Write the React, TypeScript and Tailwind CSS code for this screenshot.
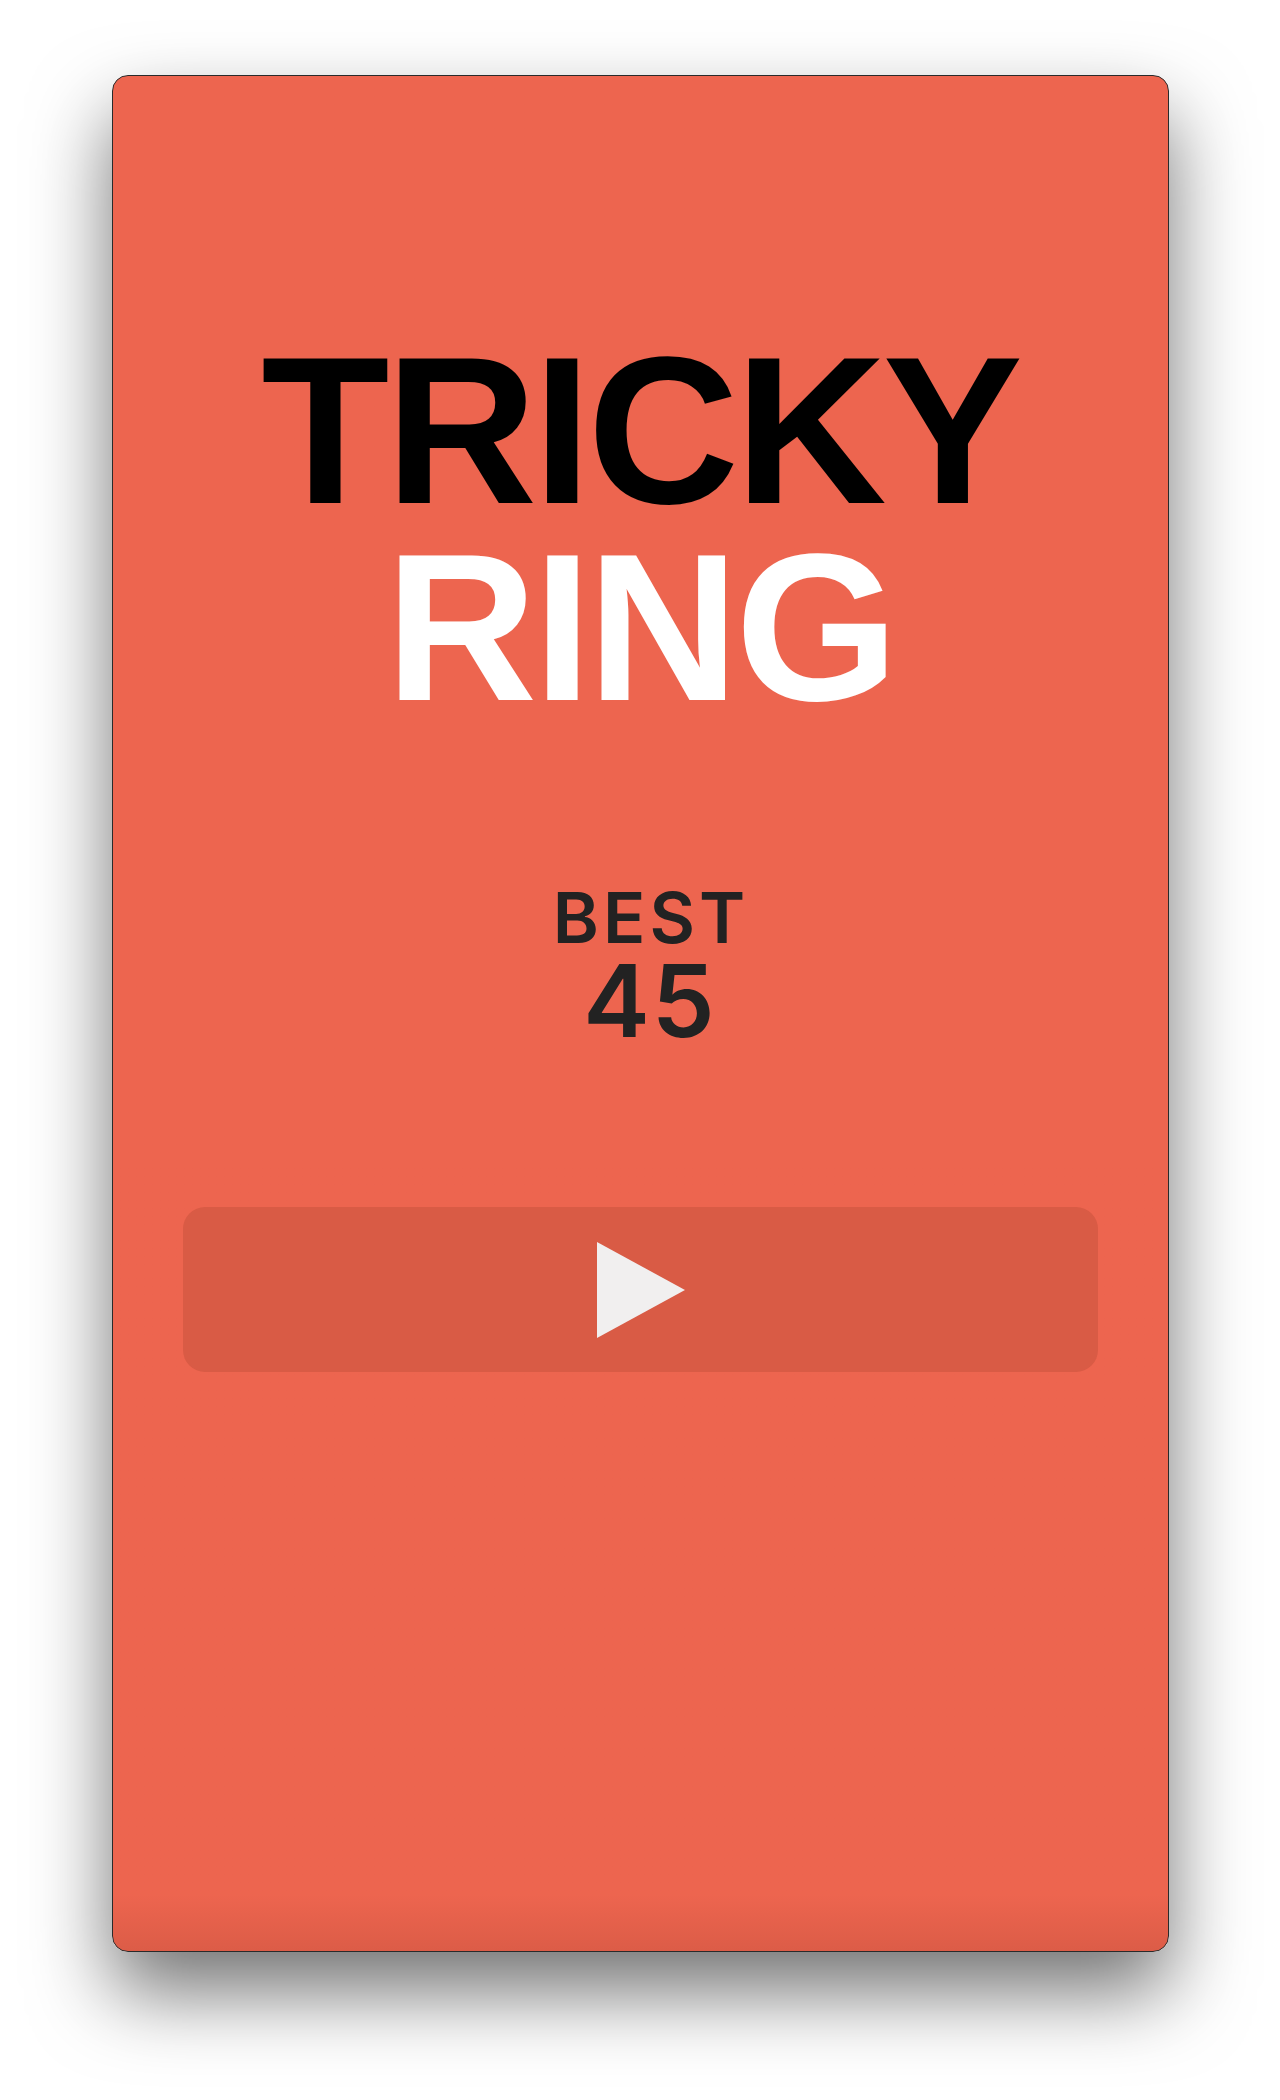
export default function App() {
  return (
    <div className="min-h-[2100px] w-full bg-white flex flex-col items-center pt-[75px]">
      <div className="w-[1057px] h-[1877px] rounded-[16px] border border-[#2a2a2a] bg-gradient-to-b from-[#ed654f] from-[97%] to-[#dc5c47] shadow-[0_40px_80px_rgba(0,0,0,0.55)] flex flex-col items-center px-[70px] pt-[256px] overflow-hidden">
        <h1
          className="text-center text-[210px] leading-[197px] font-bold tracking-[-4px]"
          style={{ fontFamily: '"Liberation Sans", Arial, sans-serif' }}
        >
          <span className="block text-black">TRICKY</span>
          <span className="block text-white">RING</span>
        </h1>

        <div
          className="mt-[157px] ml-[18px] flex flex-col items-center text-[#222222]"
          style={{ fontFamily: 'Inter, "Open Sans", sans-serif' }}
        >
          <span className="text-[70px] leading-[69px] font-semibold tracking-[4px] pl-[4px]">BEST</span>
          <span className="text-[100px] leading-[98px] font-semibold tracking-[2px] pl-[2px]">45</span>
        </div>

        <button className="mt-[157px] w-full h-[165px] rounded-[22px] bg-[#d95b45] flex items-center justify-center">
          <svg width="90" height="96" viewBox="0 0 90 96" className="ml-[4px]">
            <polygon points="0,0 88,48 0,96" fill="#f1efef" />
          </svg>
        </button>
      </div>
    </div>
  );
}
